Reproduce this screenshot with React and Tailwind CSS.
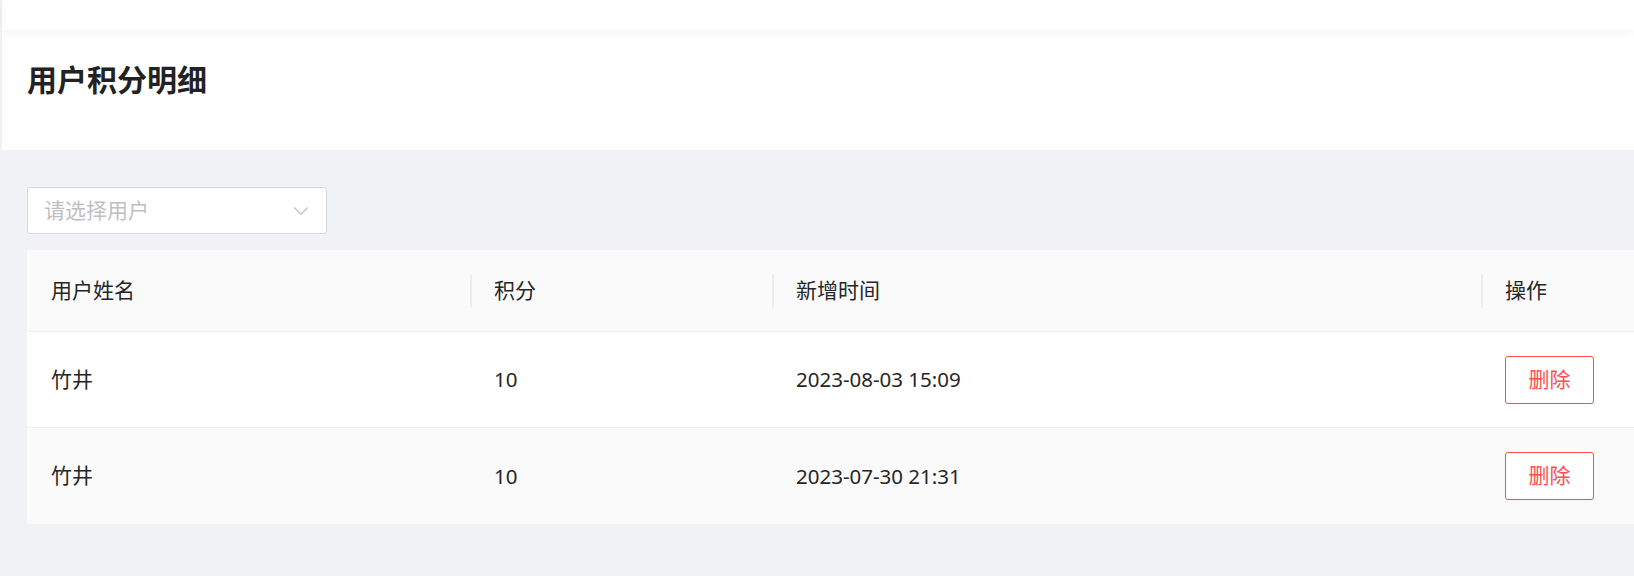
import { ChevronDown } from 'lucide-react'

const ROWS = [
  { name: '竹井', points: 10, time: '2023-08-03 15:09' },
  { name: '竹井', points: 10, time: '2023-07-30 21:31' },
]

const COLS = 'grid grid-cols-[443px_302px_709px_1fr]'

function HeadCell({ children, sep }) {
  return (
    <div className="relative flex items-center pl-6">
      {sep && <span className="absolute left-0 top-1/2 -translate-y-1/2 h-[33px] w-[2px] bg-[#ececec]" />}
      {children}
    </div>
  )
}

export default function App() {
  return (
    <div
      className="min-h-screen bg-[#f0f2f5] text-[#262626] border-l-2 border-[#f2f2f4]"
      style={{ fontFamily: '"Noto Sans", "Noto Sans CJK SC", sans-serif' }}
    >
      {/* top bar */}
      <div className="relative z-10 h-[30px] bg-white shadow-[0_2px_8px_rgba(0,0,0,0.06)]" />

      {/* page header */}
      <div className="h-[120px] bg-white pt-[30px] pl-[25px]">
        <h1 className="text-[30px] leading-[40px] font-bold text-[#222]">用户积分明细</h1>
      </div>

      <div className="pt-[37px] pl-[25px] pb-10">
        {/* select */}
        <div className="w-[300px] h-[47px] bg-white border border-[#d9d9d9] rounded-[3px] flex items-center justify-between pl-[16px] pr-[12px]">
          <span className="text-[21px] text-[#bfbfbf]">请选择用户</span>
          <ChevronDown size={26} strokeWidth={1} className="text-[#bfbfbf]" />
        </div>

        {/* table */}
        <div className="mt-4 bg-white text-[21px]">
          <div className={`${COLS} h-[82px] bg-[#fafafa] border-b border-[#f0f0f0]`}>
            <HeadCell>用户姓名</HeadCell>
            <HeadCell sep>积分</HeadCell>
            <HeadCell sep>新增时间</HeadCell>
            <HeadCell sep>操作</HeadCell>
          </div>
          {ROWS.map((r, i) => (
            <div
              key={i}
              className={`${COLS} h-[96px] ${i === 0 ? 'bg-white border-b border-[#f0f0f0]' : 'bg-[#fafafa]'}`}
            >
              <div className="flex items-center pl-6">{r.name}</div>
              <div className="flex items-center pl-6 text-[20.5px]">{r.points}</div>
              <div className="flex items-center pl-6 text-[20.5px]">{r.time}</div>
              <div className="flex items-center pl-6">
                <button className="w-[89px] h-[48px] bg-white border border-[#ff4d4f] rounded-[3px] text-[#ff4d4f] text-[21px] shadow-[0_2px_0_rgba(0,0,0,0.015)]">
                  删除
                </button>
              </div>
            </div>
          ))}
        </div>
      </div>
    </div>
  )
}
